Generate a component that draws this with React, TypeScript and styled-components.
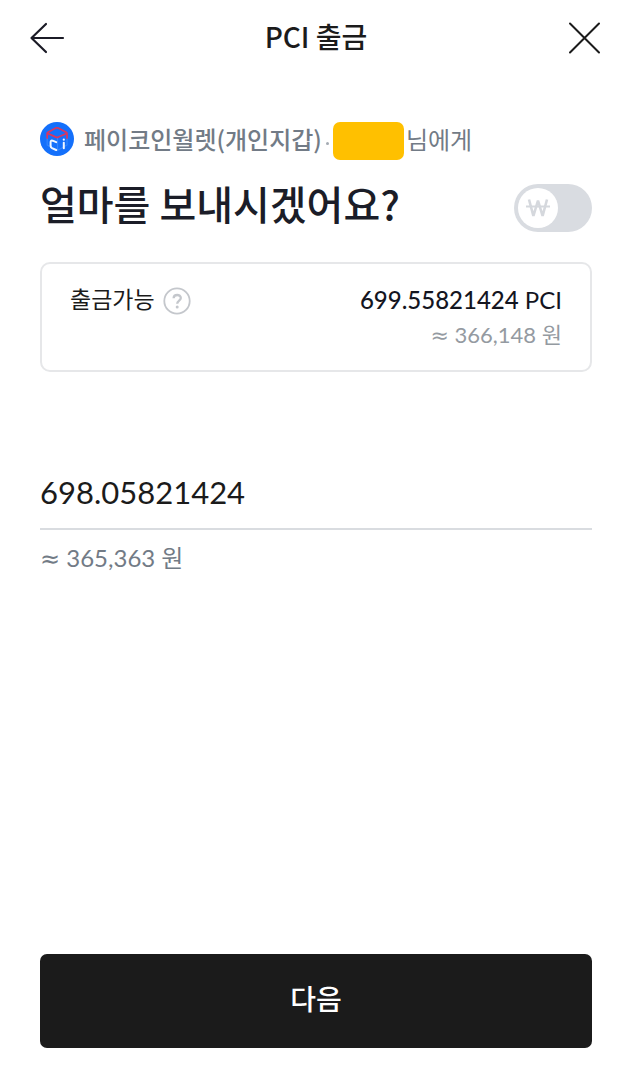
import React, { useState } from "react";
import styled, { createGlobalStyle } from "styled-components";

const GlobalStyle = createGlobalStyle`
  *, *::before, *::after { box-sizing: border-box; }
  body {
    margin: 0;
    background: #fff;
    color: #1b1b1b;
    font-family: "Noto Sans CJK KR", sans-serif;
  }
  button, input { font: inherit; color: inherit; }
`;

const numberFont = `Lato, "Noto Sans CJK KR", sans-serif`;

const Screen = styled.div`
  display: flex;
  flex-direction: column;
  min-height: 100vh;
`;

const Header = styled.header`
  display: flex;
  align-items: center;
  justify-content: space-between;
  height: 76px;
  padding: 0 28px;
`;

const PageTitle = styled.h1`
  margin: 0;
  padding-bottom: 4px;
  font-size: 28px;
  line-height: 40px;
  font-weight: 500;
`;

const IconButton = styled.button`
  display: flex;
  padding: 0;
  border: 0;
  background: none;
  cursor: pointer;
`;

const Content = styled.main`
  display: flex;
  flex: 1;
  flex-direction: column;
  padding: 44px 40px 34px;
`;

const Recipient = styled.div`
  display: flex;
  align-items: center;
  height: 38px;
  font-size: 24px;
  line-height: 38px;
  color: #727b86;
  white-space: nowrap;
`;

const WalletName = styled.span`
  margin-left: 10px;
  font-weight: 500;
`;

const Dot = styled.span`
  width: 3px;
  height: 3px;
  margin: 8px 4px 0;
  border-radius: 50%;
  background: #a4abb3;
`;

const HiddenName = styled.span`
  width: 71px;
  height: 38px;
  margin: 4px 2px 0 0;
  border-radius: 7px;
  background: #ffc000;
`;

const QuestionRow = styled.div`
  display: flex;
  align-items: center;
  justify-content: space-between;
  height: 60px;
  margin-top: 20px;
`;

const Question = styled.h2`
  margin: 0 0 10px;
  font-size: 40px;
  line-height: 56px;
  font-weight: 500;
  color: #1b1d28;
  white-space: nowrap;
`;

const Toggle = styled.label`
  display: flex;
  width: 78px;
  height: 48px;
  padding: 4px;
  border-radius: 24px;
  background: #d9dce1;
  cursor: pointer;
  &:has(input:checked) { justify-content: flex-end; }
`;

const ToggleInput = styled.input`
  position: absolute;
  opacity: 0;
`;

const Knob = styled.span`
  display: flex;
  align-items: center;
  justify-content: center;
  width: 40px;
  height: 40px;
  border-radius: 50%;
  background: #fff;
`;

const BalanceCard = styled.section`
  display: flex;
  justify-content: space-between;
  margin-top: 24px;
  padding: 18px 28px;
  border: 2px solid #e6e7e9;
  border-radius: 10px;
`;

const BalanceLabel = styled.div`
  display: flex;
  align-items: center;
  gap: 8px;
  height: 38px;
  font-size: 23px;
  line-height: 32px;
`;

const LabelText = styled.span`
  padding-bottom: 6px;
`;

const BalanceValues = styled.div`
  text-align: right;
  font-family: ${numberFont};
  font-size: 24px;
  line-height: 36px;
`;

const Balance = styled.div`
  height: 36px;
  color: #14151f;
  strong { font-weight: 500; }
`;

const Converted = styled.div`
  height: 34px;
  font-size: 22px;
  line-height: 34px;
  color: #949aa1;
`;

const Approx = styled.span`
  font-family: "DejaVu Sans", sans-serif;
  line-height: 1;
`;

const AmountInput = styled.input`
  width: 100%;
  height: 74px;
  margin-top: 84px;
  padding: 0;
  border: 0;
  border-bottom: 2px solid #d9dce0;
  border-radius: 0;
  outline: 0;
  background: none;
  font-family: ${numberFont};
  font-size: 31px;
  color: #1b1b1b;
`;

const AmountHint = styled.p`
  margin: 10px 0 0;
  font-family: ${numberFont};
  font-size: 24px;
  line-height: 36px;
  color: #727b86;
`;

const NextButton = styled.button`
  width: 100%;
  height: 94px;
  margin-top: auto;
  padding: 0 0 6px;
  border: 0;
  border-radius: 7px;
  background: #1b1b1b;
  color: #fff;
  font-size: 28px;
  font-weight: 500;
  cursor: pointer;
`;

function BackIcon() {
  return (
    <svg width="38" height="36" viewBox="0 0 38 36" fill="none" stroke="#1b1b26" strokeWidth="2.2" strokeLinecap="round" strokeLinejoin="round" aria-hidden="true">
      <path d="M35 18H3.5M18 4L3.5 18L18 32" />
    </svg>
  );
}

function CloseIcon() {
  return (
    <svg width="38" height="36" viewBox="0 0 38 36" fill="none" stroke="#1b1b1b" strokeWidth="2" strokeLinecap="round" aria-hidden="true">
      <path d="M4 3.5L33 32.5M33 3.5L4 32.5" />
    </svg>
  );
}

function WalletLogo() {
  return (
    <svg width="34" height="34" viewBox="0 0 34 34" fill="none" strokeLinecap="round" strokeLinejoin="round" aria-hidden="true">
      <circle cx="17" cy="17" r="17" fill="#1470fb" />
      <path d="M7.2 16V23L17 28.8L27 23V16M17.5 16V28" stroke="#3385fd" strokeWidth="1.2" />
      <path d="M7.2 16V11.2Q7.2 10.6 8 10.2L15.8 6.1Q17 5.5 18.2 6.1L26.2 10.2Q27 10.6 27 11.2V16" stroke="#da365f" strokeWidth="1.7" />
      <path d="M7.6 11.4L16 15.1Q17.2 15.6 18.4 15.1L26.6 11.4" stroke="#da365f" strokeWidth="1.7" />
      <path d="M16.2 20.2L12.6 18.7Q10.6 18 10.6 20.2V23.8Q10.6 25.4 12 26.1L16.2 28" stroke="#f0f6ff" strokeWidth="2" />
      <path d="M23.8 20.8V26.2" stroke="#f0f6ff" strokeWidth="2" />
      <circle cx="23.8" cy="17.7" r="1.1" fill="#f0f6ff" />
    </svg>
  );
}

function WonIcon() {
  return (
    <svg width="26" height="22" viewBox="0 0 26 22" fill="none" stroke="#d5d8dd" strokeWidth="2.6" strokeLinejoin="bevel" aria-hidden="true">
      <path d="M4 2.5L8.4 19L13 3.5L17.6 19L22 2.5" />
      <path d="M1 9.5H25" strokeWidth="2" />
    </svg>
  );
}

function HelpIcon() {
  return (
    <svg width="28" height="28" viewBox="0 0 28 28" fill="none" stroke="#c4c7cc" aria-hidden="true">
      <circle cx="14" cy="14" r="12.7" strokeWidth="1.8" />
      <path d="M10.6 11.2C10.8 6.9 17.8 7 17.8 11C17.8 13.7 14.2 13.6 14.2 16.8" strokeWidth="2.3" />
      <circle cx="14.2" cy="20" r="1.5" fill="#c4c7cc" stroke="none" />
    </svg>
  );
}

export default function App() {
  const [amount, setAmount] = useState("698.05821424");

  return (
    <Screen>
      <GlobalStyle />
      <Header>
        <IconButton type="button" aria-label="뒤로">
          <BackIcon />
        </IconButton>
        <PageTitle>PCI 출금</PageTitle>
        <IconButton type="button" aria-label="닫기">
          <CloseIcon />
        </IconButton>
      </Header>
      <Content>
        <Recipient>
          <WalletLogo />
          <WalletName>페이코인월렛(개인지갑)</WalletName>
          <Dot />
          <HiddenName />
          <span>님에게</span>
        </Recipient>
        <QuestionRow>
          <Question id="question">얼마를 보내시겠어요?</Question>
          <Toggle>
            <ToggleInput type="checkbox" aria-label="원화로 입력" />
            <Knob>
              <WonIcon />
            </Knob>
          </Toggle>
        </QuestionRow>
        <BalanceCard>
          <BalanceLabel>
            <LabelText>출금가능</LabelText>
            <IconButton type="button" aria-label="도움말">
              <HelpIcon />
            </IconButton>
          </BalanceLabel>
          <BalanceValues>
            <Balance>
              <strong>699.55821424</strong> PCI
            </Balance>
            <Converted>
              <Approx>≈</Approx> 366,148 원
            </Converted>
          </BalanceValues>
        </BalanceCard>
        <AmountInput
          inputMode="decimal"
          aria-labelledby="question"
          value={amount}
          onChange={(event) => setAmount(event.target.value)}
        />
        <AmountHint>
          <Approx>≈</Approx> 365,363 원
        </AmountHint>
        <NextButton type="button">다음</NextButton>
      </Content>
    </Screen>
  );
}
